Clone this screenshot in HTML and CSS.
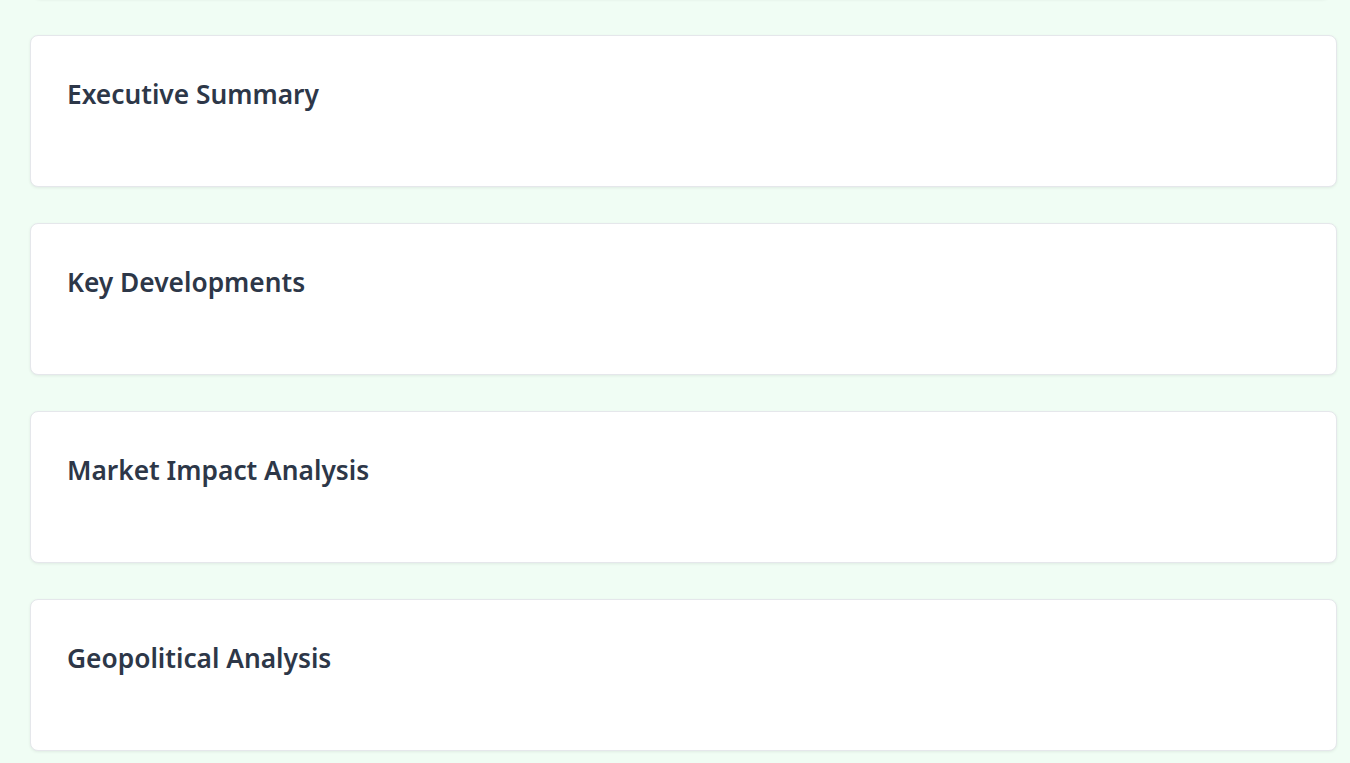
FILE: index.html
```html
<!DOCTYPE html>
<html lang="en">
<head>
<meta charset="utf-8">
<title>Report</title>
<link rel="stylesheet" href="styles.css">
</head>
<body>
<main class="page">
  <section class="card card-prev"></section>
  <section class="card"><h2 class="card-title">Executive Summary</h2></section>
  <section class="card"><h2 class="card-title">Key Developments</h2></section>
  <section class="card"><h2 class="card-title">Market Impact Analysis</h2></section>
  <section class="card"><h2 class="card-title">Geopolitical Analysis</h2></section>
</main>
</body>
</html>
```
FILE: styles.css
```css
html, body {
  margin: 0;
  padding: 0;
  background: #f0fdf4;
}
body {
  font-family: "Noto Sans", "Open Sans", sans-serif;
  overflow: hidden;
  height: 763px;
}
.page {
  display: flex;
  flex-direction: column;
  gap: 36px;
  width: 1307px;
  margin-left: 30px;
  margin-top: -102px;
}
.card {
  box-sizing: border-box;
  height: 152px;
  background: #ffffff;
  border: 1px solid #e5e7eb;
  border-radius: 8px;
  box-shadow: 0 1px 3px rgba(0, 0, 0, 0.07);
  padding: 36px 36px;
}
.card-prev {
  margin-left: 3px;
  width: 1297px;
  height: 101px;
}
.card-title {
  margin: 0;
  font-size: 26.3px;
  font-weight: 600;
  line-height: 44px;
  color: #2d3748;
}
```
